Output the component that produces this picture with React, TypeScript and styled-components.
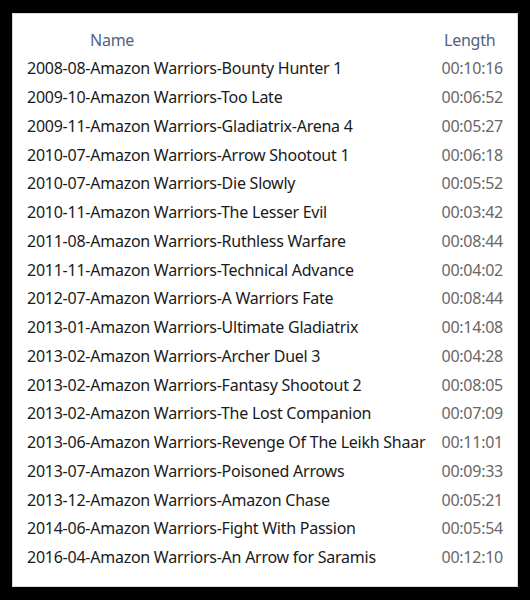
import styled, { createGlobalStyle } from "styled-components";

const GlobalStyle = createGlobalStyle`
    html, body {
        margin: 0;
        padding: 0;
        background: #000;
    }
`;

const Screen = styled.div`
    width: 530px;
    height: 600px;
    background: #000;
    padding: 13px 12px 0 12px;
    box-sizing: border-box;
`;

const Panel = styled.div`
    width: 506px;
    height: 574px;
    background: #fff;
    border: 1px solid #d8d8d8;
    box-sizing: border-box;
    font-family: "Noto Sans", "Open Sans", sans-serif;
    font-size: 16px;
    letter-spacing: -0.25px;
`;

const Header = styled.div`
    display: grid;
    grid-template-columns: 1fr 82px;
    height: 29px;
    align-items: center;
    padding-top: 11px;
    color: #4f6381;
`;

const HeaderCell = styled.div<{ $indent: number }>`
    padding-left: ${(p) => p.$indent}px;
`;

const List = styled.div`
    display: flex;
    flex-direction: column;
`;

const Row = styled.div`
    display: grid;
    grid-template-columns: 1fr 82px;
    height: 28.76px;
    align-items: center;
`;

const Title = styled.span`
    padding-left: 14px;
    color: #1a1a1a;
    white-space: nowrap;
`;

const Length = styled.span`
    color: #676767;
    text-align: right;
    padding-right: 14px;
`;

const videos: [string, string][] = [
    ["2008-08-Amazon Warriors-Bounty Hunter 1", "00:10:16"],
    ["2009-10-Amazon Warriors-Too Late", "00:06:52"],
    ["2009-11-Amazon Warriors-Gladiatrix-Arena 4", "00:05:27"],
    ["2010-07-Amazon Warriors-Arrow Shootout 1", "00:06:18"],
    ["2010-07-Amazon Warriors-Die Slowly", "00:05:52"],
    ["2010-11-Amazon Warriors-The Lesser Evil", "00:03:42"],
    ["2011-08-Amazon Warriors-Ruthless Warfare", "00:08:44"],
    ["2011-11-Amazon Warriors-Technical Advance", "00:04:02"],
    ["2012-07-Amazon Warriors-A Warriors Fate", "00:08:44"],
    ["2013-01-Amazon Warriors-Ultimate Gladiatrix", "00:14:08"],
    ["2013-02-Amazon Warriors-Archer Duel 3", "00:04:28"],
    ["2013-02-Amazon Warriors-Fantasy Shootout 2", "00:08:05"],
    ["2013-02-Amazon Warriors-The Lost Companion", "00:07:09"],
    ["2013-06-Amazon Warriors-Revenge Of The Leikh Shaar", "00:11:01"],
    ["2013-07-Amazon Warriors-Poisoned Arrows", "00:09:33"],
    ["2013-12-Amazon Warriors-Amazon Chase", "00:05:21"],
    ["2014-06-Amazon Warriors-Fight With Passion", "00:05:54"],
    ["2016-04-Amazon Warriors-An Arrow for Saramis", "00:12:10"],
];

const App = () => {
    return (
        <Screen>
            <GlobalStyle />
            <Panel>
                <Header>
                    <HeaderCell $indent={77}>Name</HeaderCell>
                    <HeaderCell $indent={9}>Length</HeaderCell>
                </Header>
                <List>
                    {videos.map(([name, length]) => (
                        <Row key={name}>
                            <Title>{name}</Title>
                            <Length>{length}</Length>
                        </Row>
                    ))}
                </List>
            </Panel>
        </Screen>
    );
};

export default App;
